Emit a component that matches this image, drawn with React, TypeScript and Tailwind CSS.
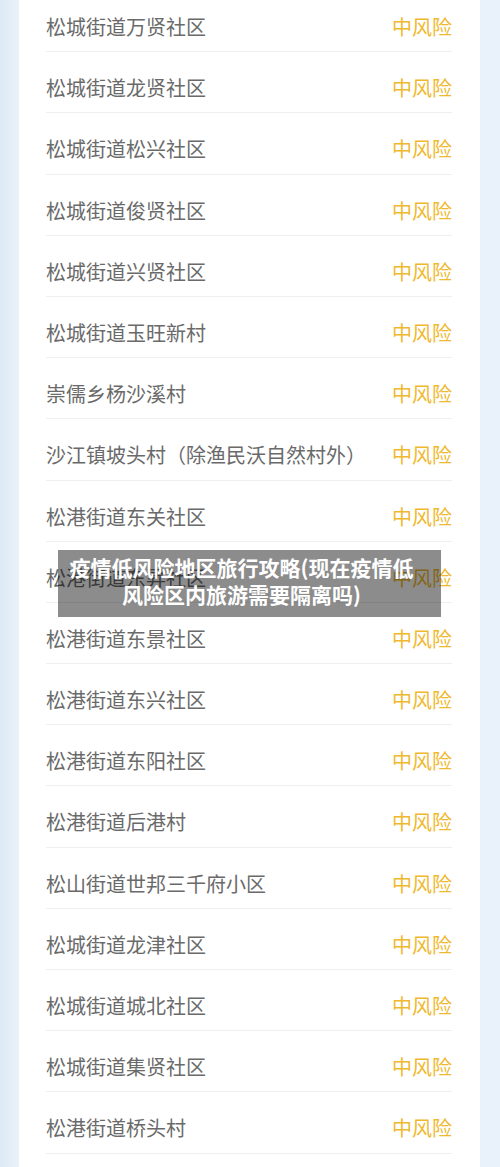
const rows = [
  "松城街道万贤社区",
  "松城街道龙贤社区",
  "松城街道松兴社区",
  "松城街道俊贤社区",
  "松城街道兴贤社区",
  "松城街道玉旺新村",
  "崇儒乡杨沙溪村",
  "沙江镇坡头村（除渔民沃自然村外）",
  "松港街道东关社区",
  "松港街道东昇社区",
  "松港街道东景社区",
  "松港街道东兴社区",
  "松港街道东阳社区",
  "松港街道后港村",
  "松山街道世邦三千府小区",
  "松城街道龙津社区",
  "松城街道城北社区",
  "松城街道集贤社区",
  "松港街道桥头村",
]

export default function App() {
  return (
    <div className="relative w-[500px] h-[1167px] overflow-hidden bg-[#e6f0f9] font-['Noto_Sans_CJK_SC','Noto_Sans',sans-serif]">
      <div className="flex h-full">
        <div className="w-[19px] bg-gradient-to-r from-[#dde9f5] to-[#eaf2fa]" />
        <div className="w-[461px] bg-white px-[27px] pr-[28px]">
          <ul className="-mt-[9px]">
            {rows.map((name, i) => (
              <li
                key={i}
                className="h-[61.2px] pt-[26px] flex justify-between border-b border-[#efefef] text-[20px] leading-[20px]"
              >
                <span className="text-[#6a6a6a]">{name}</span>
                <span className="text-[#efb92e]">中风险</span>
              </li>
            ))}
          </ul>
        </div>
        <div className="flex-1 bg-[#e9f2fa]" />
      </div>

      {/* 标题遮罩 */}
      <div className="absolute left-[58px] top-[550px] w-[383px] h-[67px] bg-black/45 flex justify-center pt-[4px] pr-[16px]">
        <p className="text-white font-bold text-[21px] leading-[27px] text-center">
          疫情低风险地区旅行攻略(现在疫情低
          <br />
          风险区内旅游需要隔离吗)
        </p>
      </div>
    </div>
  )
}
